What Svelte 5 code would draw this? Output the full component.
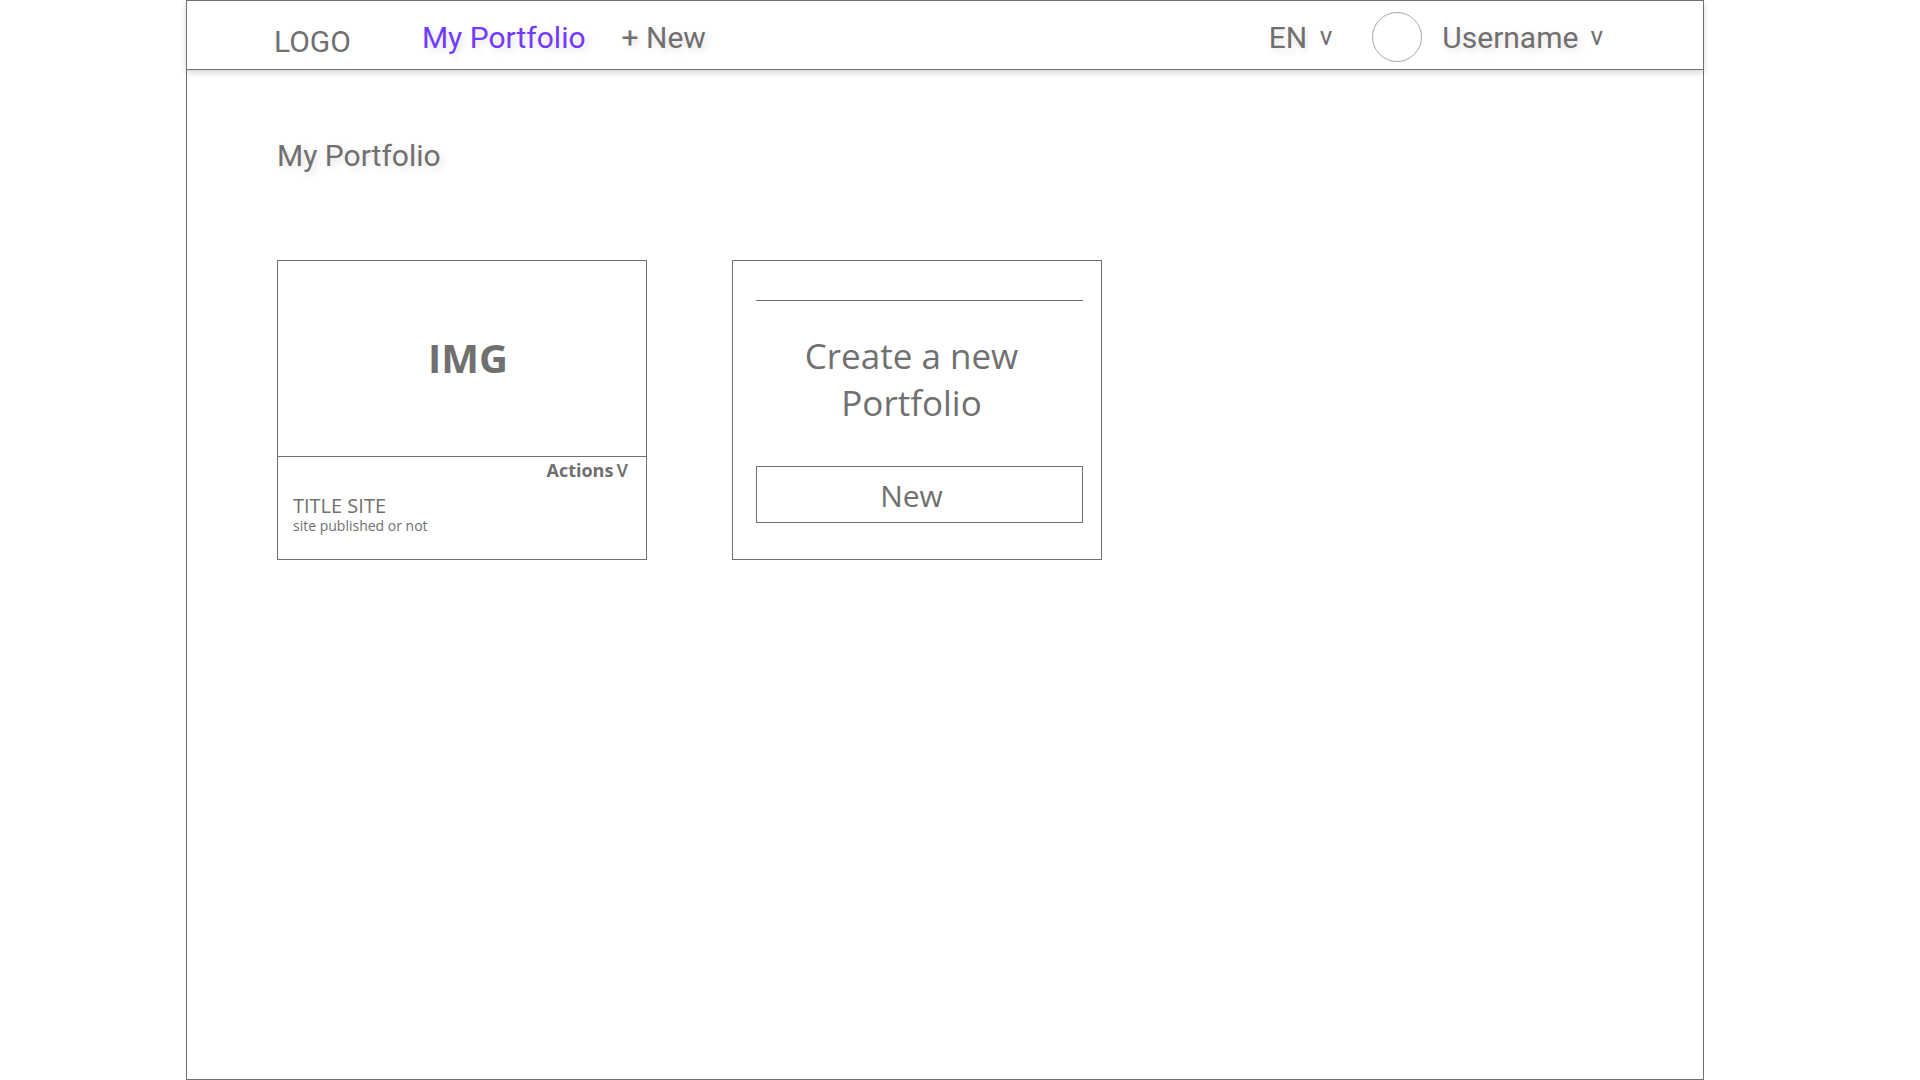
<script>
  const languages = ['EN'];
  let language = $state('EN');
  const sites = [{ title: 'TITLE SITE', status: 'site published or not' }];
</script>

<div class="frame">
  <header class="topbar">
    <a class="logo" href="#home">LOGO</a>
    <nav class="nav" aria-label="Main">
      <a class="current" href="#portfolio" aria-current="page">My Portfolio</a>
      <a href="#new">+ New</a>
    </nav>
    <div class="account">
      <label class="language">
        <select bind:value={language} aria-label="Language">
          {#each languages as code}
            <option value={code}>{code}</option>
          {/each}
        </select>
        <span class="caret" aria-hidden="true">v</span>
      </label>
      <span class="avatar"></span>
      <button class="user" type="button">
        <span>Username</span>
        <span class="caret" aria-hidden="true">v</span>
      </button>
    </div>
  </header>

  <main>
    <h1>My Portfolio</h1>
    <div class="cards">
      {#each sites as site}
        <article class="card">
          <div class="preview">IMG</div>
          <div class="details">
            <button class="actions" type="button">Actions<span>V</span></button>
            <h2>{site.title}</h2>
            <p>{site.status}</p>
          </div>
        </article>
      {/each}
      <section class="card create">
        <hr />
        <h2>Create a new Portfolio</h2>
        <button type="button">New</button>
      </section>
    </div>
  </main>
</div>

<style>
  :global(body) {
    background: #fff;
  }

  .frame,
  .frame * {
    box-sizing: border-box;
  }

  .frame {
    display: flex;
    flex-direction: column;
    min-height: 100vh;
    margin: 0 216px 0 186px;
    border: 1px solid #707070;
    color: #707070;
    font-family: 'Open Sans', 'Liberation Sans', sans-serif;
  }

  h1,
  h2,
  p {
    margin: 0;
    font-weight: 400;
  }

  a {
    color: inherit;
    text-decoration: none;
  }

  button,
  select {
    padding: 0;
    border: 0;
    background: none;
    color: inherit;
    font: inherit;
    text-shadow: inherit;
    cursor: pointer;
  }

  .topbar {
    display: flex;
    align-items: center;
    height: 70px;
    margin: -1px -1px 0;
    padding: 0 100px 0 87px;
    border: 1px solid #707070;
    box-shadow: 0 3px 6px rgba(0, 0, 0, 0.16);
    font-family: Roboto, 'Liberation Sans', sans-serif;
    font-size: 30px;
    line-height: 36px;
  }

  .logo {
    padding-top: 14px;
  }

  .nav {
    display: flex;
    gap: 36px;
    margin-left: 71px;
    padding-top: 6px;
    text-shadow: 3px 3px 6px rgba(112, 64, 64, 0.16);
  }

  .current {
    color: #713bff;
  }

  .account {
    display: flex;
    align-items: center;
    margin-left: auto;
    text-shadow: 3px 3px 6px rgba(112, 64, 64, 0.16);
  }

  .language,
  .user {
    display: flex;
    align-items: flex-start;
    gap: 12px;
    padding-top: 6px;
  }

  .language select {
    appearance: none;
  }

  .caret {
    font-size: 26px;
    line-height: 33px;
    text-shadow: none;
  }

  .avatar {
    width: 50px;
    height: 50px;
    margin: 4px 20px 0 40px;
    border: 1px solid #a8a8a8;
    border-radius: 50%;
  }

  main {
    padding: 68px 90px;
  }

  h1 {
    font-family: Roboto, 'Liberation Sans', sans-serif;
    font-size: 30px;
    line-height: 36px;
    text-shadow: 3px 3px 6px rgba(112, 64, 64, 0.16);
  }

  .cards {
    display: flex;
    flex-wrap: wrap;
    gap: 85px;
    margin-top: 86px;
  }

  .card {
    display: flex;
    flex-direction: column;
    width: 370px;
    min-height: 300px;
    border: 1px solid #707070;
  }

  .preview {
    display: flex;
    align-items: center;
    justify-content: center;
    height: 196px;
    padding: 0 0 2px 12px;
    border-bottom: 1px solid #707070;
    font-size: 40px;
    font-weight: 700;
  }

  .details {
    display: flex;
    flex-direction: column;
    padding: 0 18px 0 15px;
  }

  .actions {
    display: flex;
    align-items: baseline;
    gap: 3px;
    align-self: flex-end;
    font-size: 18px;
    font-weight: 700;
    line-height: 26px;
  }

  .actions span {
    font-family: Roboto, 'Liberation Sans', sans-serif;
    font-weight: 500;
  }

  .details h2 {
    margin-top: 10px;
    font-size: 20px;
    line-height: 24px;
  }

  .details p {
    font-size: 14px;
    line-height: 15px;
  }

  .create {
    padding: 39px 18px 36px 23px;
  }

  .create hr {
    width: 100%;
    height: 1px;
    margin: 0;
    border: 0;
    background: #707070;
  }

  .create h2 {
    margin: 31px 40px 0 24px;
    font-size: 35px;
    line-height: 47px;
    text-align: center;
  }

  .create button {
    height: 57px;
    margin-top: auto;
    padding: 1px 16px 0 0;
    border: 1px solid #707070;
    font-size: 30px;
  }
</style>
